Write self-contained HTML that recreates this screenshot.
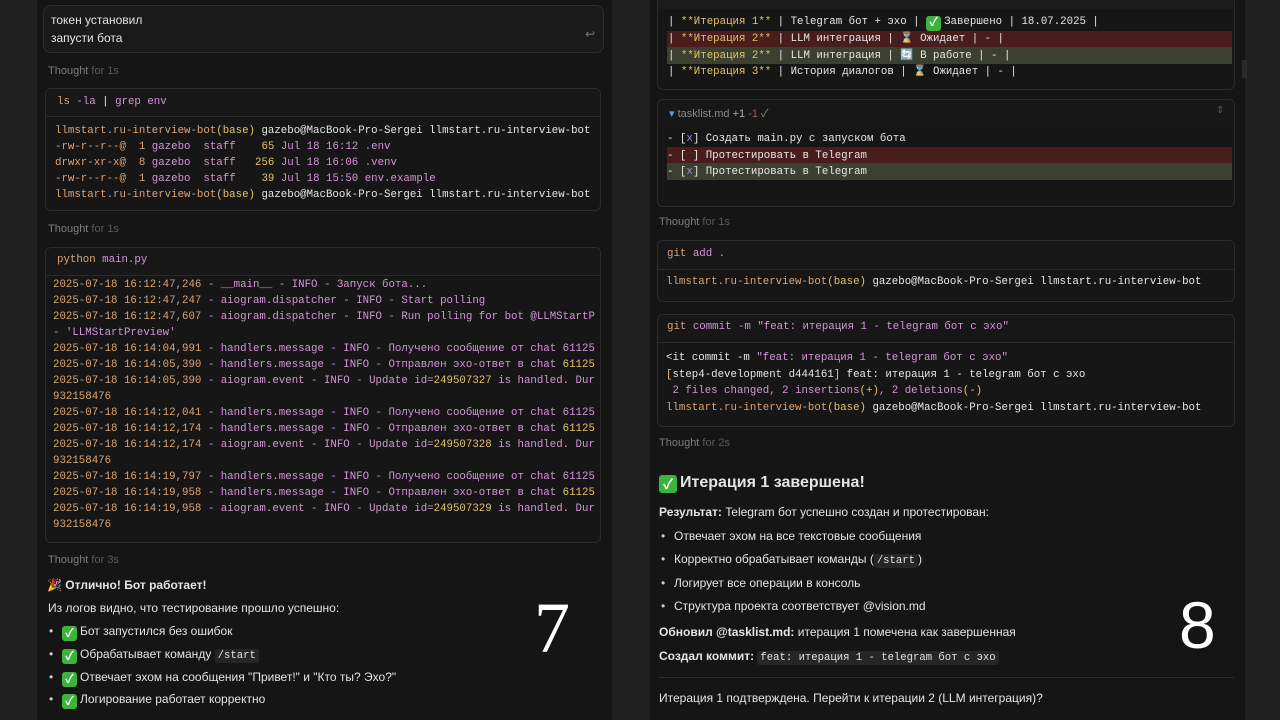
<!DOCTYPE html>
<html><head><meta charset="utf-8"><style>
*{margin:0;padding:0;box-sizing:border-box}
body{width:1280px;height:720px;background:#202020;position:relative;overflow:hidden;font-family:"Liberation Sans","Noto Sans CJK SC",sans-serif;color:#e4e4e4;font-size:12px}
.p{position:absolute;background:#151515;top:0;height:720px}
.a{position:absolute;white-space:nowrap}
.box{position:absolute;border:1px solid #2c2c2c;border-radius:6px;background:#161616;overflow:hidden}
.hd{border-bottom:1px solid #2a2a2a;background:#171717}
.m{font-family:"Liberation Mono","Noto Sans CJK SC",monospace;font-size:10.75px;white-space:pre}
.o{color:#dfa36f}.k{color:#d395d6}.y{color:#e6c069}.w{color:#e6e6e6}.g{color:#8a8a8a}
.th{color:#7d7d7d;font-size:11px}.th span{color:#5a5a5a}
.ck{display:inline-block;width:15px;height:15px;background:#3cb43c;border-radius:3px;color:#fff;font-size:12px;line-height:15px;text-align:center;font-weight:bold;vertical-align:-2px;margin-right:3px}
.li{position:absolute;white-space:nowrap;font-size:12px}
.li:before{content:"•";position:absolute;left:-13px;color:#ccc}
code{font-family:"Liberation Mono",monospace;font-size:10.6px;background:#262626;border-radius:3px;padding:1px 3px}
.big{position:absolute;font-family:"Liberation Serif",serif;font-size:72px;color:#fff;line-height:1}
</style></head><body>
<div class="p" style="left:37px;width:575px"></div>
<div class="p" style="left:650px;width:595px"></div>
<div style="position:absolute;left:1242px;top:60px;width:5px;height:18px;background:#2a2a2a"></div>

<!-- LEFT -->
<div class="box" style="left:43px;top:5px;width:561px;height:48px;background:#1a1a1a;border-color:#2e2e2e;border-radius:8px"></div>
<div class="a" style="left:51px;top:13px;font-size:12px">токен установил</div>
<div class="a" style="left:51px;top:31px;font-size:12px">запусти бота</div>
<div class="a" style="left:585px;top:27px;color:#777;font-size:12px">↩</div>
<div class="a th" style="left:48px;top:65px">Thought <span>for 1s</span></div>

<div class="box" style="left:45px;top:88px;width:556px;height:123px"><div class="hd" style="height:28px"></div></div>
<div class="a m" style="left:57px;top:96px"><span class="o">ls</span> <span class="k">-la</span> <span class="w">|</span> <span class="k">grep env</span></div>
<div class="a m" style="left:55px;top:123px;line-height:16px"><span class="o">llmstart.ru-interview-bot</span><span class="y">(base)</span> <span class="w">gazebo@MacBook-Pro-Sergei llmstart.ru-interview-bot</span>
<span class="o">-rw-r--r--@</span>  <span class="o">1</span> <span class="k">gazebo</span>  <span class="k">staff</span>    <span class="y">65</span> <span class="k">Jul 18 16:12 .env</span>
<span class="o">drwxr-xr-x@</span>  <span class="o">8</span> <span class="k">gazebo</span>  <span class="k">staff</span>   <span class="y">256</span> <span class="k">Jul 18 16:06 .venv</span>
<span class="o">-rw-r--r--@</span>  <span class="o">1</span> <span class="k">gazebo</span>  <span class="k">staff</span>    <span class="y">39</span> <span class="k">Jul 18 15:50 env.example</span>
<span class="o">llmstart.ru-interview-bot</span><span class="y">(base)</span> <span class="w">gazebo@MacBook-Pro-Sergei llmstart.ru-interview-bot</span></div>
<div class="a th" style="left:48px;top:223px">Thought <span>for 1s</span></div>

<div class="box" style="left:45px;top:247px;width:556px;height:296px"><div class="hd" style="height:28px"></div></div>
<div class="a m" style="left:57px;top:254px"><span class="o">python</span> <span class="k">main.py</span></div>
<div class="a m" style="left:53px;top:277px;line-height:16px;width:542px;overflow:hidden"><span class="o">2025-07-18 16:12:47,246</span> <span class="k">- __main__ - INFO - Запуск бота...</span>
<span class="o">2025-07-18 16:12:47,247</span> <span class="k">- aiogram.dispatcher - INFO - Start polling</span>
<span class="o">2025-07-18 16:12:47,607</span> <span class="k">- aiogram.dispatcher - INFO - Run polling for bot @LLMStartP</span>
<span class="k">- 'LLMStartPreview'</span>
<span class="o">2025-07-18 16:14:04,991</span> <span class="k">- handlers.message - INFO - Получено сообщение от chat 61125</span>
<span class="o">2025-07-18 16:14:05,390</span> <span class="k">- handlers.message - INFO - Отправлен эхо-ответ в chat </span><span class="y">61125</span>
<span class="o">2025-07-18 16:14:05,390</span> <span class="k">- aiogram.event - INFO - Update id=</span><span class="y">249507327</span><span class="k"> is handled. Dur</span>
<span class="o">932158476</span>
<span class="o">2025-07-18 16:14:12,041</span> <span class="k">- handlers.message - INFO - Получено сообщение от chat 61125</span>
<span class="o">2025-07-18 16:14:12,174</span> <span class="k">- handlers.message - INFO - Отправлен эхо-ответ в chat </span><span class="y">61125</span>
<span class="o">2025-07-18 16:14:12,174</span> <span class="k">- aiogram.event - INFO - Update id=</span><span class="y">249507328</span><span class="k"> is handled. Dur</span>
<span class="o">932158476</span>
<span class="o">2025-07-18 16:14:19,797</span> <span class="k">- handlers.message - INFO - Получено сообщение от chat 61125</span>
<span class="o">2025-07-18 16:14:19,958</span> <span class="k">- handlers.message - INFO - Отправлен эхо-ответ в chat </span><span class="y">61125</span>
<span class="o">2025-07-18 16:14:19,958</span> <span class="k">- aiogram.event - INFO - Update id=</span><span class="y">249507329</span><span class="k"> is handled. Dur</span>
<span class="o">932158476</span></div>
<div class="a th" style="left:48px;top:554px">Thought <span>for 3s</span></div>
<div class="a" style="left:47px;top:578px;font-weight:bold">🎉 Отлично! Бот работает!</div>
<div class="a" style="left:48px;top:601px">Из логов видно, что тестирование прошло успешно:</div>
<div class="li" style="left:62px;top:624px"><span class="ck">✓</span>Бот запустился без ошибок</div>
<div class="li" style="left:62px;top:647px"><span class="ck">✓</span>Обрабатывает команду <code>/start</code></div>
<div class="li" style="left:62px;top:670px"><span class="ck">✓</span>Отвечает эхом на сообщения "Привет!" и "Кто ты? Эхо?"</div>
<div class="li" style="left:62px;top:692px"><span class="ck">✓</span>Логирование работает корректно</div>
<div class="big" style="left:534px;top:592px">7</div>

<!-- RIGHT -->
<div class="box" style="left:657px;top:-10px;width:578px;height:100px"><div style="height:18px;background:#1b1b1b"></div></div>
<div style="position:absolute;left:667px;top:31px;width:565px;height:16px;background:#4a1d1d"></div>
<div style="position:absolute;left:667px;top:47px;width:565px;height:17px;background:#3b4130"></div>
<div class="a m" style="left:668px;top:14px;line-height:16.5px"><span class="w">| </span><span class="y">**Итерация 1**</span><span class="w"> | Telegram бот + эхо | </span><span class="ck">✓</span><span class="w">Завершено | 18.07.2025 |</span>
<span class="w">| </span><span class="y">**Итерация 2**</span><span class="w"> | LLM интеграция | ⌛ Ожидает | - |</span>
<span class="w">| </span><span class="y">**Итерация 2**</span><span class="w"> | LLM интеграция | 🔄 В работе | - |</span>
<span class="w">| </span><span class="y">**Итерация 3**</span><span class="w"> | История диалогов | ⌛ Ожидает | - |</span></div>

<div class="box" style="left:657px;top:99px;width:578px;height:108px"><div style="height:26px;background:#171717"></div></div>
<div class="a" style="left:669px;top:105px;font-size:11px;color:#8a8a8a"><span style="color:#6a9bd0">▾</span> tasklist.md <span style="color:#aaa">+1</span> <span style="color:#b55">-1</span> ✓</div>
<div class="a" style="left:1216px;top:105px;font-size:10px;color:#555">⇕</div>
<div style="position:absolute;left:667px;top:147px;width:565px;height:16px;background:#4a1d1d"></div>
<div style="position:absolute;left:667px;top:163px;width:565px;height:17px;background:#3b4130"></div>
<div class="a m w" style="left:667px;top:131px;line-height:16.5px">- [<span style="color:#a08cd8">x</span>] Создать main.py с запуском бота
- [ ] Протестировать в Telegram
- [<span style="color:#a08cd8">x</span>] Протестировать в Telegram</div>
<div class="a th" style="left:659px;top:216px">Thought <span>for 1s</span></div>

<div class="box" style="left:657px;top:240px;width:578px;height:62px"><div class="hd" style="height:29px"></div></div>
<div class="a m" style="left:667px;top:248px"><span class="o">git</span> <span class="k">add .</span></div>
<div class="a m" style="left:666px;top:276px"><span class="o">llmstart.ru-interview-bot</span><span class="y">(base)</span> <span class="w">gazebo@MacBook-Pro-Sergei llmstart.ru-interview-bot</span></div>

<div class="box" style="left:657px;top:314px;width:578px;height:113px"><div class="hd" style="height:28px"></div></div>
<div class="a m" style="left:667px;top:321px"><span class="o">git</span> <span class="k">commit -m "feat: итерация 1 - telegram бот с эхо"</span></div>
<div class="a m" style="left:666px;top:350px;line-height:16.7px"><span class="w">&lt;it commit -m </span><span class="k">"feat: итерация 1 - telegram бот с эхо"</span>
<span class="y">[</span><span class="w">step4-development d444161</span><span class="y">]</span><span class="w"> feat: итерация 1 - telegram бот с эхо</span>
<span class="k"> 2 files changed, 2 insertions</span><span class="y">(+)</span><span class="k">, 2 deletions</span><span class="y">(-)</span>
<span class="o">llmstart.ru-interview-bot</span><span class="y">(base)</span> <span class="w">gazebo@MacBook-Pro-Sergei llmstart.ru-interview-bot</span></div>
<div class="a th" style="left:659px;top:437px">Thought <span>for 2s</span></div>

<div class="a" style="left:659px;top:474px;font-size:16px;font-weight:bold"><span class="ck" style="width:18px;height:18px;line-height:18px;font-size:14px">✓</span>Итерация 1 завершена!</div>
<div class="a" style="left:659px;top:505px"><b>Результат:</b> Telegram бот успешно создан и протестирован:</div>
<div class="li" style="left:674px;top:529px">Отвечает эхом на все текстовые сообщения</div>
<div class="li" style="left:674px;top:552px">Корректно обрабатывает команды (<code>/start</code>)</div>
<div class="li" style="left:674px;top:576px">Логирует все операции в консоль</div>
<div class="li" style="left:674px;top:599px">Структура проекта соответствует @vision.md</div>
<div class="a" style="left:659px;top:625px"><b>Обновил @tasklist.md:</b> итерация 1 помечена как завершенная</div>
<div class="a" style="left:659px;top:649px"><b>Создал коммит:</b> <code>feat: итерация 1 - telegram бот с эхо</code></div>
<div style="position:absolute;left:659px;top:677px;width:575px;height:1px;background:#2c2c2c"></div>
<div class="a" style="left:659px;top:691px">Итерация 1 подтверждена. Перейти к итерации 2 (LLM интеграция)?</div>
<div class="big" style="left:1179px;top:592px;font-family:'Liberation Sans',sans-serif;font-size:66px">8</div>
</body></html>
